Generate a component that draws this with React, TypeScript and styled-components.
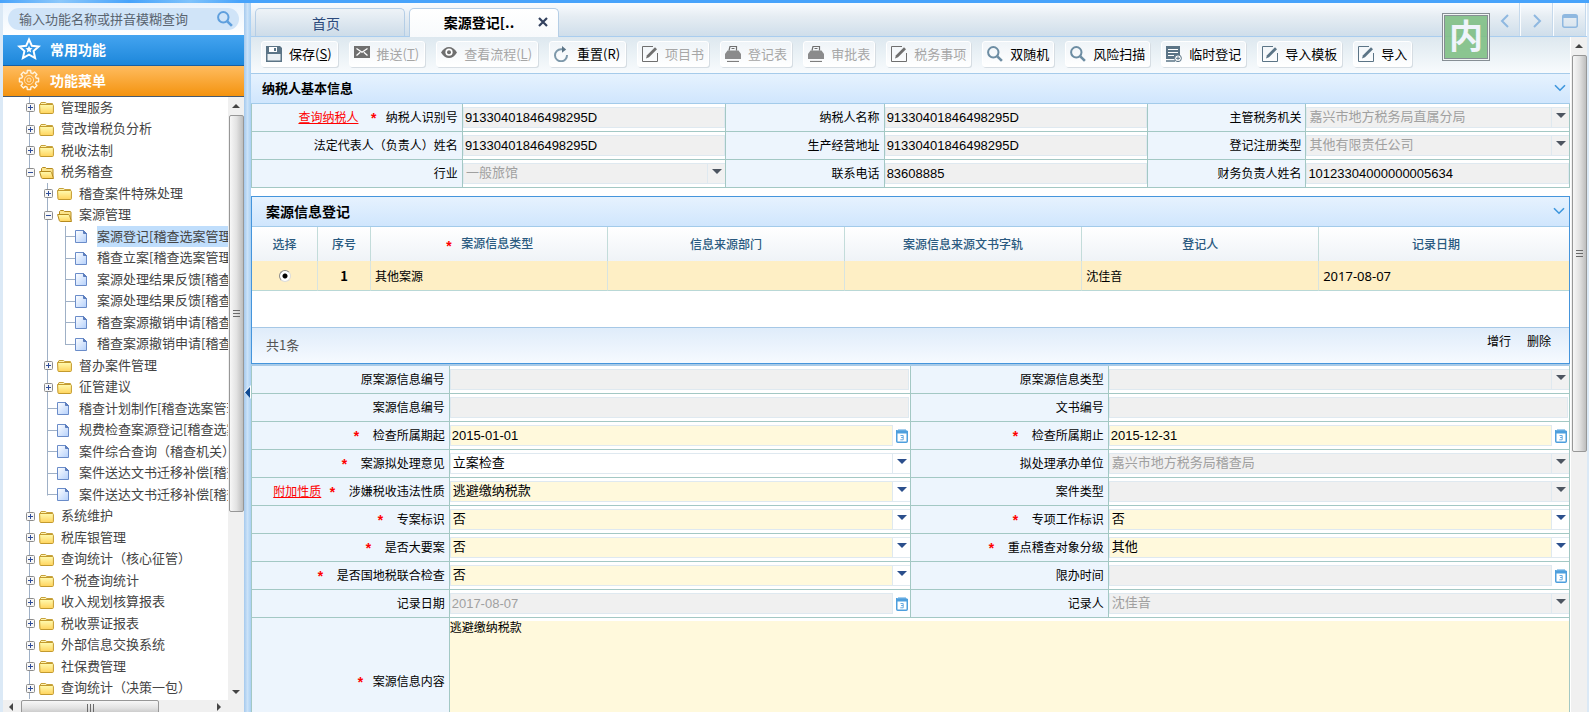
import React from 'react';
import styled, { createGlobalStyle, css } from 'styled-components';

const GlobalStyle = createGlobalStyle`
  *, *::before, *::after { box-sizing: border-box; }
  body { margin: 0; background: #dbe9f6; overflow: hidden; }
  body, button, input, select, textarea {
    font-family: "Noto Sans CJK SC", "Noto Sans", sans-serif;
  }
  button { border: 0; padding: 0; background: none; cursor: pointer; }
  ul { list-style: none; margin: 0; padding: 0; }
`;

const line = '#a3c8c4';
const numeric = '"Liberation Sans", "Noto Sans CJK SC", sans-serif';

/* ---------- shell ---------- */

const Shell = styled.div`
  display: flex;
  flex-direction: column;
  height: 100vh;
  overflow: hidden;
`;

const TopStrip = styled.div`
  flex: 0 0 3px;
  background: linear-gradient(90deg, #47a3fb 0, #8cc8fb 60px, #47a3fb 130px, #7fc3fc 190px, #47a3fb 240px);
`;

const Body = styled.div`
  flex: 1;
  min-height: 0;
  display: flex;
  padding: 0 2px 0 3px;
`;

const Sidebar = styled.aside`
  flex: 0 0 241px;
  min-width: 0;
  overflow: hidden;
  display: flex;
  flex-direction: column;
  background: #fff;
  min-height: 0;
`;

const Splitter = styled.div`
  flex: 0 0 7px;
  display: flex;
  align-items: center;
  padding-top: 68px;
  background: linear-gradient(90deg, #a5c9ed, #cbe2f8 50%, #a9d0f3);
  svg { display: block; }
`;

const Main = styled.main`
  flex: 1;
  min-width: 0;
  display: flex;
  flex-direction: column;
  background: #fff;
`;

/* ---------- sidebar ---------- */

const SearchArea = styled.div`
  flex: 0 0 31px;
  padding: 5px;
  background: linear-gradient(#e9f3fd, #fff);
`;

const SearchBox = styled.div`
  display: flex;
  align-items: center;
  height: 22px;
  padding: 0 6px 0 11px;
  border-radius: 11px;
  background: #d0e4f8;
  input {
    flex: 1;
    min-width: 0;
    height: 22px;
    padding: 0 0 2px;
    border: 0;
    outline: 0;
    background: none;
    font-size: 13px;
  }
  input::placeholder { color: #5a6570; opacity: 1; }
  button { display: flex; }
`;

const MenuHeader = styled.button<{ $tone: 'blue' | 'orange' }>`
  flex: 0 0 31px;
  display: flex;
  align-items: center;
  gap: 9px;
  padding: 0 0 2px 14px;
  color: #fff;
  font-size: 14px;
  font-weight: bold;
  line-height: 20px;
  border-bottom: 1px solid ${p => (p.$tone === 'blue' ? '#1b5f9f' : '#475a70')};
  background: ${p =>
    p.$tone === 'blue' ? 'linear-gradient(#44a4f0, #1d87da)' : 'linear-gradient(#ffbc5f, #f4930f)'};
`;

const TreeArea = styled.div`
  flex: 1;
  min-height: 0;
  display: flex;
`;

const Tree = styled.ul`
  flex: 1;
  min-width: 0;
  overflow: hidden;
  padding-left: 18px;
`;

const TreeRow = styled.li`
  display: flex;
  height: 21px;
  white-space: nowrap;
  &:nth-child(even) { height: 22px; }
`;

const guideLine = 'linear-gradient(#9fb0c6, #9fb0c6)';

const Guide = styled.span<{ $kind: 'through' | 'branch' | 'last' }>`
  flex: 0 0 18px;
  display: flex;
  align-items: center;
  padding-left: 5px;
  background-repeat: no-repeat;
  ${p => p.$kind === 'through' && css`background: ${guideLine} 8px 0 / 1px 100% no-repeat;`}
  ${p => p.$kind === 'branch' && css`
    background: ${guideLine} 8px 0 / 1px 100% no-repeat, ${guideLine} 8px 50% / 10px 1px no-repeat;
  `}
  ${p => p.$kind === 'last' && css`
    background: ${guideLine} 8px 0 / 1px 55% no-repeat, ${guideLine} 8px 50% / 10px 1px no-repeat;
  `}
  svg { display: block; }
`;

const NodeIcon = styled.span`
  flex: 0 0 22px;
  display: flex;
  align-items: center;
`;

const NodeText = styled.span<{ $selected?: boolean }>`
  flex: ${p => (p.$selected ? '1' : 'none')};
  color: #444;
  font-size: 13px;
  line-height: 19px;
  background: ${p => (p.$selected ? '#c0defc' : 'transparent')};
`;

/* ---------- scroll bars ---------- */

const VScroll = styled.div`
  flex: 0 0 16px;
  display: flex;
  flex-direction: column;
  align-items: center;
  background: #f0f0f0;
  svg { display: block; flex: none; }
`;

const VThumb = styled.div`
  flex: 0 0 397px;
  width: 15px;
  display: flex;
  align-items: center;
  justify-content: center;
  border: 1px solid #979797;
  border-radius: 2px;
  background: linear-gradient(90deg, #f7f7f7, #e2e2e2 50%, #bdbdbd);
`;

const VRest = styled.div`
  flex: 1;
`;

const HScroll = styled.div`
  flex: 0 0 12px;
  display: flex;
  align-items: flex-start;
  padding-right: 17px;
  background: #f0f0f0;
  overflow: hidden;
  svg { display: block; flex: none; }
`;

const HThumb = styled.div`
  flex: 0 0 138px;
  height: 16px;
  display: flex;
  justify-content: center;
  padding-top: 3px;
  border: 1px solid #979797;
  border-radius: 2px;
  background: linear-gradient(#f7f7f7, #e2e2e2 50%, #bdbdbd);
`;

/* ---------- tabs ---------- */

const TabStrip = styled.nav`
  flex: 0 0 34px;
  display: flex;
  align-items: flex-end;
  gap: 4px;
  padding-left: 4px;
  border-bottom: 1px solid #a9cdef;
  background: linear-gradient(#f9fcff, #e6edf3 40%, #cfdeeb);
`;

const Tab = styled.button<{ $active?: boolean }>`
  width: 150px;
  height: 28px;
  display: flex;
  align-items: center;
  justify-content: center;
  border: 1px solid #b5cee6;
  border-bottom: 0;
  border-radius: 5px 5px 0 0;
  font-size: 14px;
  line-height: 20px;
  ${p =>
    p.$active
      ? css`
          height: 29px;
          margin-bottom: -1px;
          gap: 24px;
          padding: 0 0 2px 24px;
          color: #000;
          font-weight: bold;
          background: linear-gradient(#fff, #f8fafc);
        `
      : css`
          padding-right: 8px;
          color: #2c4a7c;
          background: linear-gradient(#eef3f7, #cddce9);
        `}
`;

const TabTools = styled.div`
  align-self: stretch;
  margin-left: auto;
  display: flex;
`;

const TabTool = styled.button`
  width: 33px;
  display: flex;
  align-items: center;
  justify-content: center;
  padding-top: 2px;
  border-right: 1px solid #fbfdff;
  box-shadow: inset -1px 0 0 #c5d9ec;
`;

/* ---------- toolbar ---------- */

const Work = styled.div`
  flex: 1;
  min-height: 0;
  display: flex;
`;

const Page = styled.div`
  flex: 1;
  min-width: 0;
  overflow: hidden;
  margin-right: 1px;
`;

const Toolbar = styled.div`
  display: flex;
  gap: 11px;
  height: 37px;
  padding: 4px 0 5px 10px;
  border-bottom: 1px solid #a6cbea;
  background: linear-gradient(#dde8ef, #f8fbfd);
`;

const ToolButton = styled.button<{ $hotkey?: boolean }>`
  display: flex;
  align-items: center;
  gap: 7px;
  height: 26px;
  padding: 0 ${p => (p.$hotkey ? '5px' : '4px')} 0 4px;
  border: 1px solid #fff;
  border-radius: 3px;
  box-shadow: 1px 1px 0 #d6dde3;
  background: linear-gradient(#eff4f8, #fff);
  color: #000;
  font-size: 13px;
  line-height: 20px;
  white-space: nowrap;
  &:disabled { color: #a6a6a6; }
  svg { display: block; flex: none; }
`;

/* ---------- panels ---------- */

const Panel = styled.section<{ $framed?: boolean }>`
  ${p => p.$framed && css`
    margin-top: 8px;
    border: 1px solid #4595dc;
    box-shadow: 0 2px 0 #a9cbe8;
  `}
`;

const PanelHead = styled.header<{ $large?: boolean }>`
  display: flex;
  align-items: center;
  justify-content: space-between;
  height: 30px;
  padding: 0 4px 2px ${p => (p.$large ? '14px' : '11px')};
  border-bottom: 1px solid #a3cbea;
  background: linear-gradient(#e6f2fe, #d0e6fd);
  h2 {
    margin: 0;
    color: #000;
    font-size: ${p => (p.$large ? '14px' : '13px')};
    line-height: 20px;
  }
  button { display: flex; }
`;

const FormGrid = styled.div<{ $columns: string; $gapTop?: boolean }>`
  display: grid;
  grid-template-columns: ${p => p.$columns};
  border-left: 1px solid ${line};
  margin-top: ${p => (p.$gapTop ? '2px' : '0')};
`;

const LabelCell = styled.div<{ $tall?: boolean }>`
  display: flex;
  align-items: center;
  justify-content: flex-end;
  height: ${p => (p.$tall ? '128px' : '28px')};
  padding: 0 4px 1px 0;
  border-right: 1px solid ${line};
  border-bottom: 1px solid ${line};
  background: #edf5fd;
  color: #000;
  font-size: 12px;
  line-height: 18px;
  white-space: nowrap;
  a { color: #f00; }
`;

const Star = styled.span<{ $near?: boolean }>`
  display: inline-block;
  height: 18px;
  vertical-align: middle;
  margin: 0 ${p => (p.$near ? '8px' : '12px')} 0 ${p => (p.$near ? '11px' : '7px')};
  padding-top: 3px;
  color: #f00;
  font-family: "Liberation Mono", monospace;
  font-size: 14px;
  font-weight: bold;
  line-height: 18px;
`;

const FieldCell = styled.div<{ $wide?: boolean }>`
  display: flex;
  min-width: 0;
  grid-column: ${p => (p.$wide ? 'span 3' : 'auto')};
  padding: 3px 0;
  border-right: 1px solid ${line};
  border-bottom: 1px solid ${line};
  background: #fff;
`;

type Tone = 'grey' | 'yellow' | 'white';
const fill = { grey: '#f0f0f0', yellow: '#fff9dc', white: '#fff' };

const TextBox = styled.input<{ $tone: Tone; $inset?: boolean }>`
  flex: 1;
  min-width: 0;
  height: 21px;
  margin-right: ${p => (p.$inset ? '1px' : '0')};
  padding: 0 1px;
  border: 1px solid #dfe9f0;
  outline: 0;
  background: ${p => fill[p.$tone]};
  color: #000;
  font-family: ${numeric};
  font-size: 13px;
  &:disabled { color: #a0a0a0; }
`;

const SelectWrap = styled.div<{ $disabled?: boolean }>`
  flex: 1;
  min-width: 0;
  display: grid;
  grid-template-columns: 1fr 17px;
  background: ${p => (p.$disabled ? '#f1f1f1' : '#fff')};
  svg { grid-area: 1 / 2; align-self: center; justify-self: center; margin-bottom: 4px; pointer-events: none; }
`;

const SelectBox = styled.select<{ $tone: Tone }>`
  grid-area: 1 / 1 / 2 / 3;
  min-width: 0;
  height: 21px;
  padding: 0 0 4px 2px;
  margin: 0;
  border: 1px solid #dfe9f0;
  border-right: 0;
  border-radius: 0;
  outline: 0;
  appearance: none;
  color: #000;
  font-size: 13px;
  line-height: 15px;
  background: linear-gradient(#dfe9f0, #dfe9f0) right 17px top 0 / 1px 100% no-repeat,
    linear-gradient(90deg, transparent calc(100% - 17px), ${p => (p.$tone === 'grey' ? '#f1f1f1' : '#fff')} 0),
    ${p => fill[p.$tone]};
  &:disabled { color: #a0a0a0; opacity: 1; }
`;

const DateButton = styled.button`
  flex: 0 0 17px;
  display: flex;
  align-items: center;
  justify-content: center;
`;

const Area = styled.textarea`
  flex: 1;
  padding: 0;
  border: 0;
  outline: 0;
  resize: none;
  background: #fff9dc;
  color: #000;
  font-size: 12px;
  line-height: 12px;
`;

/* ---------- record list ---------- */

const Records = styled.table`
  width: 100%;
  table-layout: fixed;
  border-collapse: separate;
  border-spacing: 0;
  font-size: 12px;
  line-height: 18px;
  th {
    height: 34px;
    padding: 0;
    color: #2a5a80;
    font-weight: 500;
    border-right: 1px solid #c3dcda;
    background: linear-gradient(#fff, #eff3f7);
  }
  td {
    height: 30px;
    padding: 0 4px;
    color: #000;
    border-right: 1px solid #d8e4e0;
    border-bottom: 1px solid #b9d8d6;
    background: #feefc5;
  }
  th ${Star} { margin-left: 0; }
  th:last-child, td:last-child { border-right: 0; }
  th:last-child { padding-right: 16px; }
`;

const Col = styled.col<{ $w: string }>`
  width: ${p => p.$w};
`;

const MiddleCell = styled.td`
  text-align: center;
  font-weight: bold;
  font-size: 13px;
`;

const DateCell = styled.td`
  font-family: "Noto Sans", sans-serif;
  font-size: 13px;
`;

const Radio = styled.input`
  appearance: none;
  display: block;
  width: 12px;
  height: 12px;
  margin: 0 auto;
  border: 1px solid #8a8a8a;
  border-right-color: #dcdcdc;
  border-bottom-color: #dcdcdc;
  border-radius: 50%;
  background: radial-gradient(circle, #000 0 2px, #fff 3px);
`;

const Blank = styled.div`
  height: 36px;
`;

const ListFoot = styled.footer`
  display: flex;
  justify-content: space-between;
  height: 36px;
  padding: 7px 18px 0 14px;
  border-top: 1px solid #a6c8e6;
  background: linear-gradient(#dfecfa, #f6faff);
  span { color: #555; font-size: 13px; line-height: 20px; }
  div { display: flex; gap: 16px; }
  button { height: 12px; font-size: 12px; line-height: 12px; color: #000; }
`;

const Seal = styled.div`
  position: absolute;
  top: 13px;
  right: 99px;
  width: 48px;
  height: 48px;
  border: 1px solid #868e94;
  box-shadow: inset 0 0 0 1px #f2f6f4, inset 0 0 0 2px #868e94;
  background: rgba(125, 190, 130, 0.88);
  color: #eff4fb;
  font-size: 34px;
  font-weight: bold;
  line-height: 42px;
  text-align: center;
`;

/* ---------- drawings ---------- */

const Caret = ({ color = '#2b4f8c' }) => (
  <svg width="10" height="5" viewBox="0 0 10 5"><path d="M0 0h10L5 5z" fill={color} /></svg>
);

const Chevron = () => (
  <svg width="12" height="8" viewBox="0 0 12 8" fill="none" stroke="#3d96dd" strokeWidth="1.6">
    <path d="M1 1.2l5 5 5-5" />
  </svg>
);

const Calendar = () => (
  <svg width="12" height="14" viewBox="0 0 12 14">
    <rect x=".75" y="2" width="10.5" height="11.2" rx="1" fill="#fff" stroke="#4e9fdd" strokeWidth="1.5" />
    <path d="M0 1h1.500v1h1V0h1v2h1V0h1v2h1V0h1v2h1V0h1v2H12v2.500H0z" fill="#4e9fdd" />
    <path d="M4.500 6.500h2.700v2H5.300h1.900v2.300H4.300" fill="none" stroke="#6aaade" strokeWidth="1" />
  </svg>
);

const Magnifier = ({ color = '#6d8da3' }) => (
  <svg width="16" height="16" viewBox="0 0 16 16" fill="none" stroke={color}>
    <circle cx="6.300" cy="6.300" r="5.200" strokeWidth="2" />
    <path d="M10.300 10.300l4.600 4.600" strokeWidth="2.600" />
  </svg>
);

const Box = ({ open }: { open?: boolean }) => (
  <svg width="9" height="9" viewBox="0 0 9 9">
    <rect x=".5" y=".5" width="8" height="8" rx="1" fill="#f7f7f7" stroke="#8c8c8c" />
    <path d={open ? 'M2 4.500h5' : 'M2 4.500h5M4.500 2v5'} stroke="#2f4d99" />
  </svg>
);

const Folder = ({ open }: { open?: boolean }) => (
  <svg width="16" height="15" viewBox="0 0 16 15">
    <defs>
      <linearGradient id="folder" x1="0" y1="0" x2="0" y2="1">
        <stop offset="0" stopColor="#fffbb0" /><stop offset="1" stopColor="#ffd35c" />
      </linearGradient>
    </defs>
    {open ? (
      <>
        <path d="M2.500 6V3.500l1-1h3l1 1H13q1 0 1 1v8" fill="#fbe48c" stroke="#b58a1e" />
        <path d="M.6 6.500h10.600q1 0 1.400 1l1.900 6H3.600q-1 0-1.300-1z" fill="url(#folder)" stroke="#b58a1e" />
      </>
    ) : (
      <>
        <path d="M1 4.500l1-2h4.500l1.200 1H13.500v9H1.500z" fill="#fff3b0" stroke="#c6a23c" />
        <path d="M.6 4.500h12.800q1 0 1 1v7q0 1-1 1H1.900q-1 0-1-1z" fill="url(#folder)" stroke="#c39a2e" />
      </>
    )}
  </svg>
);

const Doc = () => (
  <svg width="13" height="15" viewBox="0 0 13 15">
    <defs>
      <linearGradient id="doc" x1="0" y1="0" x2="1" y2="1">
        <stop offset="0" stopColor="#fff" /><stop offset="1" stopColor="#b4d0fb" />
      </linearGradient>
    </defs>
    <path d="M.5 1.500h8l3 3v9H.5z" fill="url(#doc)" stroke="#6a8cc9" />
    <path d="M8.500 1.500v3h3z" fill="#5f80c0" stroke="#5b7dbd" />
  </svg>
);

const StarBadge = () => (
  <svg width="24" height="24" viewBox="0 0 24 24" fill="none" stroke="#fff">
    <path d="M12 2.500l2.900 6.300 6.800.7-5.100 4.600 1.500 6.900L12 17.600 5.900 21l1.500-6.900L2.300 9.500l6.800-.7z" strokeWidth="2" />
    <path d="M12 8.800l1 2.300 2.500.2-1.900 1.700.6 2.500-2.200-1.300-2.200 1.300.6-2.500-1.900-1.700 2.500-.2z" fill="#fff" stroke="none" />
  </svg>
);

const gear = Array.from({ length: 8 }, (_, i) => {
  const at = (r: number, d: number) => {
    const a = ((i * 45 + d) * Math.PI) / 180;
    return `${(12 + r * Math.sin(a)).toFixed(2)} ${(12 - r * Math.cos(a)).toFixed(2)}`;
  };
  return `${i ? 'L' : 'M'}${at(7.4, -15)}L${at(9.7, -10)}L${at(9.7, 10)}L${at(7.4, 15)}`;
}).join('') + 'Z';

const GearBadge = () => (
  <svg width="24" height="24" viewBox="0 0 24 24" fill="none" stroke="#fff3dd" strokeWidth="1.400">
    <path d={gear} strokeLinejoin="round" />
    <circle cx="12" cy="12" r="4.600" strokeWidth="1" strokeOpacity=".7" />
    <circle cx="12" cy="12" r="2" strokeWidth="1" strokeOpacity=".7" />
  </svg>
);

type IconName = 'save' | 'mail' | 'eye' | 'reset' | 'edit' | 'print' | 'find' | 'form';

const ToolIcon = ({ name, off }: { name: IconName; off?: boolean }) => {
  const c = off ? '#6f6f6f' : '#5b7486';
  if (name === 'find') return <Magnifier />;
  return (
    <svg width="16" height="16" viewBox="0 0 16 16" fill="none">
      {name === 'save' && (
        <>
          <path d="M0 0h14l2 2v14H0z" fill={c} />
          <path d="M3 1h8v5H3z" fill="#fff" /><path d="M8 2h2v3H8z" fill={c} />
          <path d="M1.500 8h13v6.500h-13z" fill="#e9eff3" />
        </>
      )}
      {name === 'mail' && (
        <>
          <path d="M0 0h16v12H0z" fill={c} />
          <path d="M2.500 2.500L8 6.200l5.500-3.700M2.500 9.500l3.700-3.300M13.500 9.500L9.800 6.200" stroke="#fff" strokeWidth="1.300" />
        </>
      )}
      {name === 'eye' && (
        <>
          <path d="M0 6.500Q3.500 1 8 1t8 5.500Q12.500 12 8 12T0 6.500z" fill={c} />
          <circle cx="8" cy="6.200" r="3.600" fill="#fff" /><circle cx="8" cy="6.200" r="2" fill={c} />
        </>
      )}
      {name === 'reset' && (
        <>
          <path d="M9.500 3.300H7A6 6 0 1 0 13 9" stroke="#7d98aa" strokeWidth="2" />
          <path d="M8 0l4.200 3.500L8 6.800z" fill={c} />
        </>
      )}
      {name === 'edit' && (
        <>
          <path d="M11 .5H.5v15h15V7" stroke={c} />
          <path d="M4 12.500l1-3.200 8-8 2 2-8 8z" fill={c} />
        </>
      )}
      {name === 'print' && (
        <>
          <path d="M4 4.500l1-4h6.500v4M6.500 2.500h3" stroke={c} strokeWidth="1.200" />
          <path d="M2.500 4.500h11L16 8v5H0V8z" fill={c} fillOpacity=".8" />
          <path d="M2 15.400h12" stroke={c} />
        </>
      )}
      {name === 'form' && (
        <>
          <path d="M0 0h14v13H0z" fill={c} />
          <path d="M2 3.500h10M2 6.500h10M2 9.500h6" stroke="#fff" />
          <path d="M0 15h9" stroke={c} strokeWidth="1.500" />
          <circle cx="12" cy="12.300" r="3.400" fill="#fff" stroke={c} />
          <path d="M12 10.300v4M10 12.300h4" stroke={c} />
        </>
      )}
    </svg>
  );
};

const ScrollArrow = ({ d, w = 16, h = 18 }: { d: string; w?: number; h?: number }) => (
  <svg width={w} height={h} viewBox={`0 0 ${w} ${h}`}><path d={d} fill="#444" /></svg>
);

const VerticalScroll = ({ endArrow }: { endArrow?: boolean }) => (
  <VScroll aria-hidden="true">
    <ScrollArrow d="M4 11l4-4 4 4z" />
    <VThumb>
      <svg width="7" height="9" viewBox="0 0 7 9" stroke="#6a6a6a"><path d="M0 1.500h7M0 4.500h7M0 7.500h7" /></svg>
    </VThumb>
    <VRest />
    {endArrow && <ScrollArrow d="M4 8l4 4 4-4z" />}
  </VScroll>
);

/* ---------- data ---------- */

type Node = { text: string; level: 0 | 1 | 2; kind: 'closed' | 'open' | 'doc'; last?: boolean; selected?: boolean };

const closed = (text: string, level: 0 | 1 = 0): Node => ({ text, level, kind: 'closed' });
const open = (text: string, level: 0 | 1): Node => ({ text, level, kind: 'open' });
const doc = (text: string, level: 1 | 2, last = false): Node => ({ text, level, kind: 'doc', last });

const nodes: Node[] = [
  closed('管理服务'), closed('营改增税负分析'), closed('税收法制'), open('税务稽查', 0),
  closed('稽查案件特殊处理', 1), open('案源管理', 1),
  { ...doc('案源登记[稽查选案管理]', 2), selected: true },
  doc('稽查立案[稽查选案管理]', 2), doc('案源处理结果反馈[稽查选案]', 2), doc('案源处理结果反馈[稽查选案]', 2),
  doc('稽查案源撤销申请[稽查选案]', 2), doc('稽查案源撤销申请[稽查选案]', 2, true),
  closed('督办案件管理', 1), closed('征管建议', 1),
  doc('稽查计划制作[稽查选案管理]', 1), doc('规费检查案源登记[稽查选案]', 1), doc('案件综合查询（稽查机关）', 1),
  doc('案件送达文书迁移补偿[稽查]', 1), doc('案件送达文书迁移补偿[稽查]', 1, true),
  closed('系统维护'), closed('税库银管理'), closed('查询统计（核心征管）'), closed('个税查询统计'),
  closed('收入规划核算报表'), closed('税收票证报表'), closed('外部信息交换系统'), closed('社保费管理'),
  closed('查询统计（决策一包）'),
];

const tools: { label: React.ReactNode; icon: IconName; off?: boolean; hotkey?: boolean }[] = [
  { label: <>保存(<u>S</u>)</>, icon: 'save', hotkey: true },
  { label: <>推送(<u>T</u>)</>, icon: 'mail', off: true, hotkey: true },
  { label: <>查看流程(<u>L</u>)</>, icon: 'eye', off: true, hotkey: true },
  { label: '重置(R)', icon: 'reset', hotkey: true },
  { label: '项目书', icon: 'edit', off: true },
  { label: '登记表', icon: 'print', off: true },
  { label: '审批表', icon: 'print', off: true },
  { label: '税务事项', icon: 'edit', off: true },
  { label: '双随机', icon: 'find' },
  { label: '风险扫描', icon: 'find' },
  { label: '临时登记', icon: 'form' },
  { label: '导入模板', icon: 'edit' },
  { label: '导入', icon: 'edit' },
];

type FieldSpec = {
  label: string;
  value?: string;
  type?: 'text' | 'select' | 'date';
  tone?: Tone;
  off?: boolean;
  star?: boolean;
  near?: boolean;
  link?: string;
  inset?: boolean;
};

const taxpayer: FieldSpec[] = [
  { label: '纳税人识别号', value: '91330401846498295D', star: true, near: true, link: '查询纳税人' },
  { label: '纳税人名称', value: '91330401846498295D' },
  { label: '主管税务机关', value: '嘉兴市地方税务局直属分局', type: 'select', off: true },
  { label: '法定代表人（负责人）姓名', value: '91330401846498295D' },
  { label: '生产经营地址', value: '91330401846498295D' },
  { label: '登记注册类型', value: '其他有限责任公司', type: 'select', off: true },
  { label: '行业', value: '一般旅馆', type: 'select', off: true },
  { label: '联系电话', value: '83608885' },
  { label: '财务负责人姓名', value: '10123304000000005634' },
];

const caseInfo: FieldSpec[] = [
  { label: '原案源信息编号', inset: true },
  { label: '原案源信息类型', type: 'select', off: true },
  { label: '案源信息编号', inset: true },
  { label: '文书编号', inset: true },
  { label: '检查所属期起', value: '2015-01-01', type: 'date', tone: 'yellow', star: true },
  { label: '检查所属期止', value: '2015-12-31', type: 'date', tone: 'yellow', star: true },
  { label: '案源拟处理意见', value: '立案检查', type: 'select', tone: 'white', star: true },
  { label: '拟处理承办单位', value: '嘉兴市地方税务局稽查局', type: 'select', off: true },
  { label: '涉嫌税收违法性质', value: '逃避缴纳税款', type: 'select', tone: 'yellow', star: true, link: '附加性质' },
  { label: '案件类型', type: 'select', off: true },
  { label: '专案标识', value: '否', type: 'select', tone: 'yellow', star: true },
  { label: '专项工作标识', value: '否', type: 'select', tone: 'yellow', star: true },
  { label: '是否大要案', value: '否', type: 'select', tone: 'yellow', star: true },
  { label: '重点稽查对象分级', value: '其他', type: 'select', tone: 'yellow', star: true },
  { label: '是否国地税联合检查', value: '否', type: 'select', tone: 'yellow', star: true },
  { label: '限办时间', type: 'date', off: true },
  { label: '记录日期', value: '2017-08-07', type: 'date', off: true },
  { label: '记录人', value: '沈佳音', type: 'select', off: true },
];

const Field = ({ spec, id }: { spec: FieldSpec; id: string }) => {
  const { label, value = '', type = 'text', tone = 'grey', off, star, near, link, inset } = spec;
  return (
    <>
      <LabelCell>
        {link && <a href="#pick">{link}</a>}
        {star && <Star $near={near}>*</Star>}
        <label htmlFor={id}>{label}</label>
      </LabelCell>
      <FieldCell>
        {type === 'select' ? (
          <SelectWrap $disabled={off}>
            <SelectBox id={id} $tone={tone} disabled={off} defaultValue={value}>
              <option value={value}>{value}</option>
            </SelectBox>
            <Caret color={off ? '#4d5560' : undefined} />
          </SelectWrap>
        ) : (
          <>
            <TextBox id={id} $tone={tone} $inset={inset} disabled={off} defaultValue={value} />
            {type === 'date' && <DateButton type="button" aria-label="选择日期"><Calendar /></DateButton>}
          </>
        )}
      </FieldCell>
    </>
  );
};

const TreeNode = ({ node }: { node: Node }) => (
  <TreeRow>
    {node.level > 0 && <Guide $kind="through" />}
    {node.level > 1 && <Guide $kind="through" />}
    {node.kind === 'doc' ? (
      <Guide $kind={node.last ? 'last' : 'branch'} />
    ) : (
      <Guide $kind="through"><Box open={node.kind === 'open'} /></Guide>
    )}
    <NodeIcon>{node.kind === 'doc' ? <Doc /> : <Folder open={node.kind === 'open'} />}</NodeIcon>
    <NodeText $selected={node.selected}>{node.text}</NodeText>
  </TreeRow>
);

export default function App() {
  return (
    <>
      <GlobalStyle />
      <Shell>
        <TopStrip />
        <Body>
          <Sidebar>
            <SearchArea>
              <SearchBox>
                <input aria-label="功能查询" placeholder="输入功能名称或拼音模糊查询" />
                <button type="button" aria-label="查询"><Magnifier color="#5f9fdd" /></button>
              </SearchBox>
            </SearchArea>
            <MenuHeader type="button" $tone="blue"><StarBadge />常用功能</MenuHeader>
            <MenuHeader type="button" $tone="orange"><GearBadge />功能菜单</MenuHeader>
            <TreeArea>
              <Tree>{nodes.map((n, i) => <TreeNode key={i} node={n} />)}</Tree>
              <VerticalScroll endArrow />
            </TreeArea>
            <HScroll aria-hidden="true">
              <ScrollArrow w={18} h={14} d="M10 3v8L6 7z" />
              <HThumb>
                <svg width="9" height="8" viewBox="0 0 9 8" stroke="#6a6a6a"><path d="M1.500 0v8M4.500 0v8M7.500 0v8" /></svg>
              </HThumb>
              <VRest />
              <ScrollArrow w={16} h={14} d="M6 3v8l4-4z" />
            </HScroll>
          </Sidebar>
          <Splitter>
            <svg width="7" height="14" viewBox="0 0 7 14">
              <path d="M7 0v14L0 7z" fill="#fff" /><path d="M6 2v11L1 7.500z" fill="#0f4a93" />
            </svg>
          </Splitter>
          <Main>
            <TabStrip>
              <Tab type="button">首页</Tab>
              <Tab type="button" $active>
                案源登记[..
                <svg width="10" height="10" viewBox="0 0 10 10" stroke="#33415e" strokeWidth="2.200"><path d="M1 1l8 8M9 1L1 9" /></svg>
              </Tab>
              <TabTools>
                <TabTool type="button" aria-label="向左">
                  <svg width="9" height="14" viewBox="0 0 9 14" fill="none" stroke="#8fb8e0" strokeWidth="2"><path d="M8 1L2 7l6 6" /></svg>
                </TabTool>
                <TabTool type="button" aria-label="向右">
                  <svg width="9" height="14" viewBox="0 0 9 14" fill="none" stroke="#8fb8e0" strokeWidth="2"><path d="M1 1l6 6-6 6" /></svg>
                </TabTool>
                <TabTool type="button" aria-label="最大化">
                  <svg width="16" height="14" viewBox="0 0 16 14" fill="none" stroke="#8fb8e0">
                    <rect x=".75" y=".75" width="14.500" height="12.500" rx="2" strokeWidth="1.500" /><path d="M1 2.500h14" strokeWidth="3" />
                  </svg>
                </TabTool>
              </TabTools>
            </TabStrip>
            <Work>
              <Page>
                <Toolbar>
                  {tools.map((t, i) => (
                    <ToolButton key={i} type="button" disabled={t.off} $hotkey={t.hotkey}>
                      <ToolIcon name={t.icon} off={t.off} />
                      <span>{t.label}</span>
                    </ToolButton>
                  ))}
                </Toolbar>
                <Panel>
                  <PanelHead>
                    <h2>纳税人基本信息</h2>
                    <button type="button" aria-label="收起"><Chevron /></button>
                  </PanelHead>
                  <FormGrid $columns="16fr 20fr 12fr 20fr 12fr 20fr">
                    {taxpayer.map((f, i) => <Field key={i} spec={f} id={`payer-${i}`} />)}
                  </FormGrid>
                </Panel>
                <Panel $framed>
                  <PanelHead $large>
                    <h2>案源信息登记</h2>
                    <button type="button" aria-label="收起"><Chevron /></button>
                  </PanelHead>
                  <Records>
                    <colgroup>
                      <Col $w="66px" /><Col $w="53px" /><Col $w="18%" /><Col $w="18%" /><Col $w="18%" /><Col $w="18%" /><Col $w="auto" />
                    </colgroup>
                    <thead>
                      <tr>
                        <th>选择</th><th>序号</th><th><Star $near>*</Star>案源信息类型</th><th>信息来源部门</th>
                        <th>案源信息来源文书字轨</th><th>登记人</th><th>记录日期</th>
                      </tr>
                    </thead>
                    <tbody>
                      <tr>
                        <td><Radio type="radio" name="record" aria-label="选择第1条" defaultChecked /></td>
                        <MiddleCell>1</MiddleCell>
                        <td>其他案源</td><td /><td /><td>沈佳音</td><DateCell>2017-08-07</DateCell>
                      </tr>
                    </tbody>
                  </Records>
                  <Blank />
                  <ListFoot>
                    <span>共1条</span>
                    <div><button type="button">增行</button><button type="button">删除</button></div>
                  </ListFoot>
                </Panel>
                <FormGrid $columns="15fr 35fr 15fr 35fr" $gapTop>
                  {caseInfo.map((f, i) => <Field key={i} spec={f} id={`case-${i}`} />)}
                  <LabelCell $tall>
                    <Star $near>*</Star>
                    <label htmlFor="case-content">案源信息内容</label>
                  </LabelCell>
                  <FieldCell $wide><Area id="case-content" defaultValue="逃避缴纳税款" /></FieldCell>
                </FormGrid>
              </Page>
              <VerticalScroll />
            </Work>
          </Main>
        </Body>
        <Seal>内</Seal>
      </Shell>
    </>
  );
}
